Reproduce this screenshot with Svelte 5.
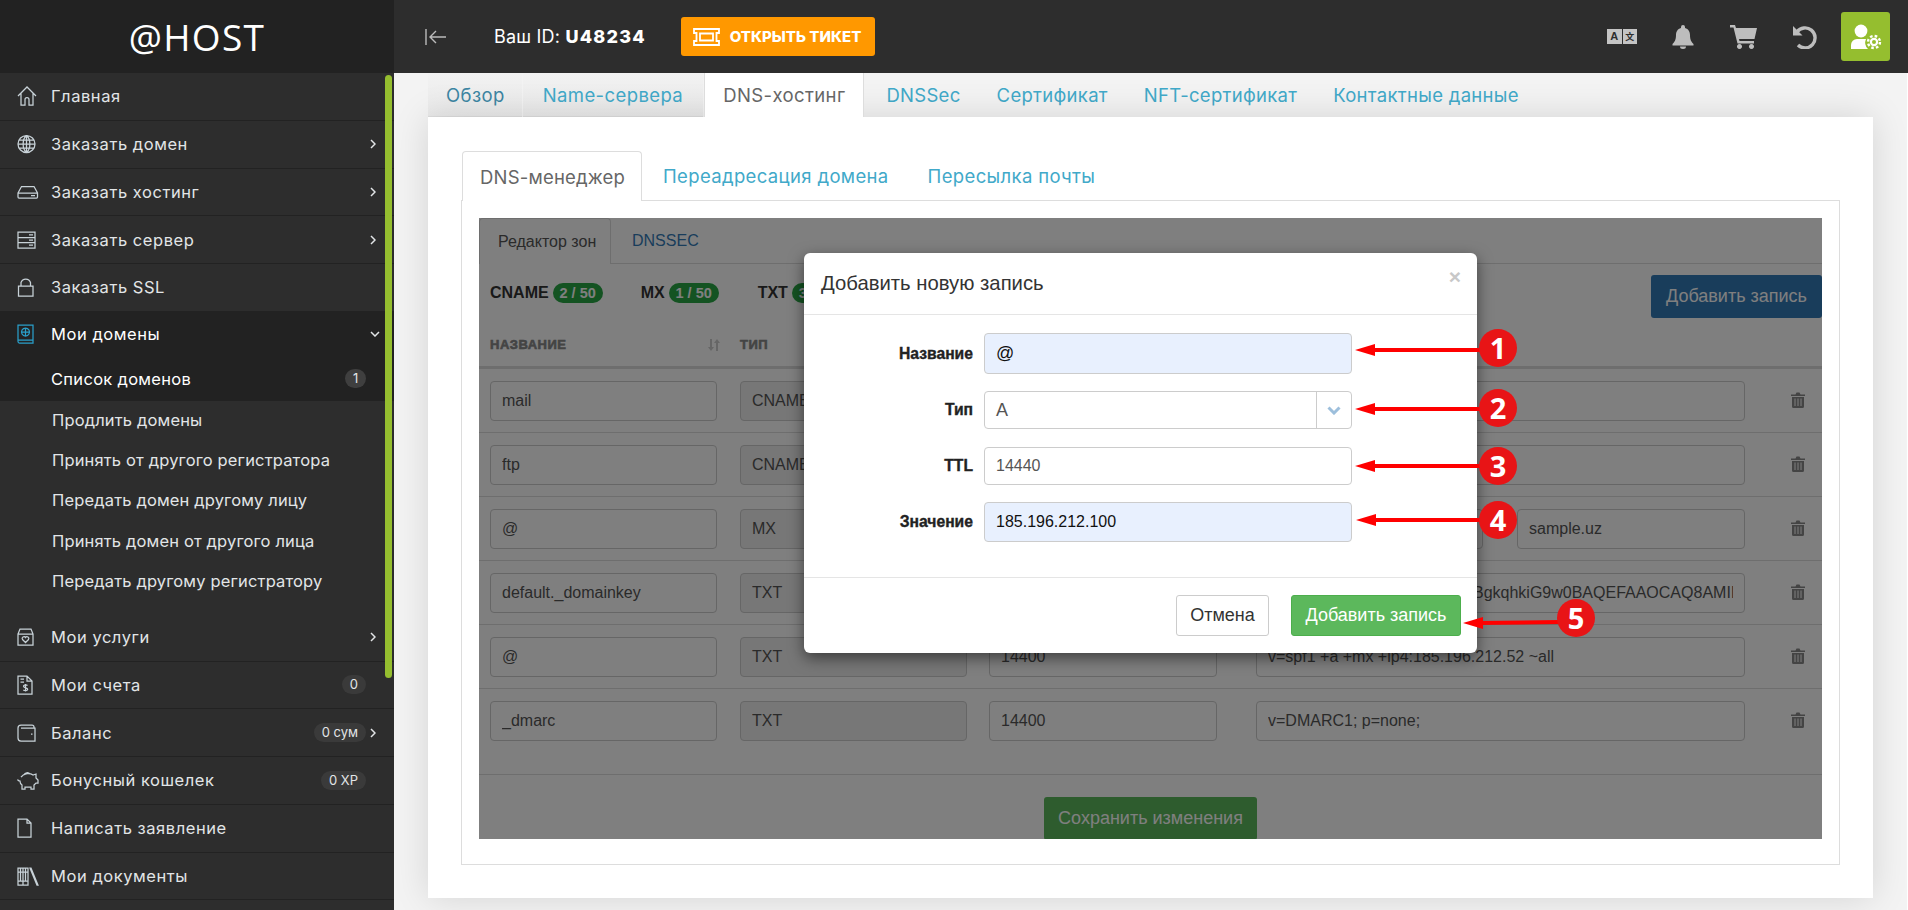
<script>
  const nav1 = [
    { t: 'Главная', i: 'home' },
    { t: 'Заказать домен', i: 'globe', c: 1 },
    { t: 'Заказать хостинг', i: 'hdd', c: 1 },
    { t: 'Заказать сервер', i: 'server', c: 1 },
    { t: 'Заказать SSL', i: 'lock' }
  ];
  const nav2 = [
    { t: 'Мои услуги', i: 'box', c: 1 },
    { t: 'Мои счета', i: 'invoice', b: '0' },
    { t: 'Баланс', i: 'wallet', b: '0 сум', c: 1 },
    { t: 'Бонусный кошелек', i: 'piggy', b: '0 XP' },
    { t: 'Написать заявление', i: 'file' },
    { t: 'Мои документы', i: 'books' }
  ];
  const subs = ['Продлить домены', 'Принять от другого регистратора', 'Передать домен другому лицу', 'Принять домен от другого лица', 'Передать другому регистратору'];
  const icons = {
    home: 'M1 11 L10 2 L19 11 M4 8.5 V20 H8 V14.5 A2 2 0 0 1 12 14.5 V20 H16 V8.5',
    globe: 'M1 11 a8.5 8.5 0 1 0 17 0 a8.5 8.5 0 1 0 -17 0 M1 11 H18 M2 7 H17 M2 15 H17 M9.5 2.5 C5 6 5 16 9.5 19.5 C14 16 14 6 9.5 2.5 M9.5 2.5 V19.5',
    hdd: 'M1 12 L4.5 5.5 H17 L20.5 12 V16 a1 1 0 0 1 -1 1 H2 a1 1 0 0 1 -1 -1 Z M1 12 H20.5 M14 14.5 H18',
    server: 'M1 3 H18 V19 H1 Z M1 8.5 H18 M1 13.5 H18 M12 5.8 H16 M12 11 H16 M12 16 H16',
    lock: 'M1.5 10 H16 V20 H1.5 Z M4 10 V6.5 A5 5 0 0 1 13.5 6.5 V10',
    domains: 'M1 2 H16 V20 H2.5 A1.5 1.5 0 0 1 1 18.5 Z M1 17 H16 M8.5 5 a4 4 0 1 0 .01 0 M4.5 9 H12.5 M8.5 5 V13',
    box: 'M1 8 L3 3 H14 L16 8 V19 H1 Z M1 8 H16 M8.5 16.5 L5.5 13.5 A1.8 1.8 0 0 1 8.5 11.5 A1.8 1.8 0 0 1 11.5 13.5 Z',
    invoice: 'M1 2 H10 L15 7 V20 H1 Z M10 2 V7 H15 M3.5 5 H7 M3.5 8 H7 M10.5 11.5 c-1 -1 -4 -1 -4 .8 c0 2 4.2 1 4.2 3 c0 1.5 -3 1.6 -4.4 .6 M8.5 10 V17.5',
    wallet: 'M1 6 a3 3 0 0 1 3 -3 H15 a2 2 0 0 1 2 2 V6 H4 M1 6 V16 a3 3 0 0 0 3 3 H18 V6 H17 M14 12 h1.5',
    piggy: 'M4 8 C7 4 13 4 16 6 L19 5 V9 L21 11 V14 H19 L17 16 V20 H14 V18 H8 V20 H5 V16 C3.5 15 3 14 3 12 C2 12 1 11.5 .5 10.5 M7 6 A3.5 3.5 0 0 1 13 5',
    file: 'M1 2 H10 L14 6 V20 H1 Z M10 2 V6 H14',
    books: 'M1 3 H6 V20 H1 Z M6 3 H11 V20 H6 Z M1 7 H11 M1 16 H11 M3.5 3 V7 M8.5 3 V7 M3.5 7 V16 M8.5 7 V16 M13 3 L14 3 L21 20 L20 20 Z'
  };
  const tabs = ['Обзор', 'Name-сервера', 'DNS-хостинг', 'DNSSec', 'Сертификат', 'NFT-сертификат', 'Контактные данные'];
  const rows = [
    { n: 'mail', ty: 'CNAME', ttl: '14400', v: 'mail.sample.uz' },
    { n: 'ftp', ty: 'CNAME', ttl: '14400', v: 'sample.uz' },
    { n: '@', ty: 'MX', ttl: '14400', p: '10', v: 'sample.uz' },
    { n: 'default._domainkey', ty: 'TXT', ttl: '14400', v: 'v=DKIM1; k=rsa; p=MIIBIjANBgkqhkiG9w0BAQEFAAOCAQ8AMIIBCgKCAQEA' },
    { n: '@', ty: 'TXT', ttl: '14400', v: 'v=spf1 +a +mx +ip4:185.196.212.52 ~all' },
    { n: '_dmarc', ty: 'TXT', ttl: '14400', v: 'v=DMARC1; p=none;' }
  ];
  const marks = [
    { n: 1, cx: 1498, cy: 348, x1: 1355, y1: 350, x2: 1482, y2: 350 },
    { n: 2, cx: 1498, cy: 408, x1: 1355, y1: 409, x2: 1482, y2: 409 },
    { n: 3, cx: 1498, cy: 466, x1: 1355, y1: 466, x2: 1482, y2: 466 },
    { n: 4, cx: 1498, cy: 520, x1: 1356, y1: 520, x2: 1482, y2: 520 },
    { n: 5, cx: 1576, cy: 618, x1: 1463, y1: 623, x2: 1560, y2: 622 }
  ];
</script>

<div class="app">
  <div class="logo">@HOST</div>

  <header class="top">
    <svg class="toggle" width="22" height="18" viewBox="0 0 22 18"><path d="M1 1 V17 M21 9 H5 M11 3 L5 9 L11 15" /></svg>
    <div class="uid">Ваш ID: <b>U48234</b></div>
    <div class="ticket">
      <svg width="27" height="18" viewBox="0 0 27 18"><path d="M1 1 H26 V5 H23.5 V13 H26 V17 H1 V13 H3.5 V5 H1 Z M7 5.5 H20 V12.5 H7 Z" /></svg>
      <span>ОТКРЫТЬ ТИКЕТ</span>
    </div>
    <div class="tools">
      <div class="lang"><span>A</span><span class="zh">文</span></div>
      <svg class="bell" width="22" height="24" viewBox="0 0 22 24"><path d="M11 0 a2 2 0 0 1 2 2 v1 c3.5 1 5 4 5 7 c0 5 1.5 7 3.5 9 v1.5 H.5 V19 C2.5 17 4 15 4 10 c0 -3 1.5 -6 5 -7 V2 a2 2 0 0 1 2 -2 z M8 21.5 h6 a3 2.5 0 0 1 -6 0 z" /></svg>
      <svg class="cart" width="27" height="24" viewBox="0 0 27 24"><path d="M0 0 H5 L6 3 H27 L24.5 14 H9 L9.5 16 H24 V18.5 H7.5 L3.5 2.5 H0 Z M9.5 19 a2.5 2.5 0 1 1 -.01 0 Z M21.5 19 a2.5 2.5 0 1 1 -.01 0 Z" /></svg>
      <svg class="undo" width="25" height="24" viewBox="0 0 25 24"><path class="arc" d="M5 7 A10 10 0 1 1 6 20" /><path d="M1 1 V10.5 H10.5 Z" /></svg>
      <div class="user">
        <svg width="32" height="26" viewBox="0 0 32 26"><circle cx="11" cy="7" r="6.4" /><path d="M1 25 V21 A6 6 0 0 1 7 15 H16 A9 9 0 0 0 18 25 Z" /><circle class="teeth" cx="24" cy="18" r="6" /><circle class="gear" cx="24" cy="18" r="4.2" /><circle class="hole" cx="24" cy="18" r="2" /></svg>
      </div>
    </div>
  </header>

  <aside class="side">
    {#each nav1 as it}
      <div class="row">
        <svg class="ic" width="22" height="22" viewBox="0 0 22 22"><path d={icons[it.i]} /></svg>
        <span class="lbl">{it.t}</span>
        {#if it.c}<svg class="chev" width="6" height="10" viewBox="0 0 6 10"><path d="M1 1 L5 5 L1 9" /></svg>{/if}
      </div>
    {/each}
    <div class="open">
      <div class="row head">
        <svg class="ic blue" width="22" height="22" viewBox="0 0 22 22"><path d={icons.domains} /></svg>
        <span class="lbl">Мои домены</span>
        <svg class="chev down" width="10" height="6" viewBox="0 0 10 6"><path d="M1 1 L5 5 L9 1" /></svg>
      </div>
      <div class="sub cur"><span>Список доменов</span><em class="pill one">1</em></div>
    </div>
    <div class="sublist">
      {#each subs as s}
        <div class="sub">{s}</div>
      {/each}
    </div>
    {#each nav2 as it}
      <div class="row">
        <svg class="ic" width="22" height="22" viewBox="0 0 22 22"><path d={icons[it.i]} /></svg>
        <span class="lbl">{it.t}</span>
        {#if it.b}<em class="pill">{it.b}</em>{/if}
        <span class="slot">{#if it.c}<svg class="chev" width="6" height="10" viewBox="0 0 6 10"><path d="M1 1 L5 5 L1 9" /></svg>{/if}</span>
      </div>
    {/each}
    <div class="thumb"></div>
  </aside>

  <main class="main">
    <nav class="ttabs">
      {#each tabs as t, i}
        <span class="ttab" class:active={i === 2} class:first={i === 0}>{t}</span>
      {/each}
    </nav>
    <section class="panel">
      <nav class="itabs">
        <span class="itab active">DNS-менеджер</span>
        <span class="itab">Переадресация домена</span>
        <span class="itab">Пересылка почты</span>
      </nav>
      <div class="ibox">
        <div class="zone">
          <nav class="ztabs">
            <span class="ztab active">Редактор зон</span>
            <span class="ztab">DNSSEC</span>
          </nav>
          <div class="counts">
            <b class="cn">CNAME</b><span class="cb">2 / 50</span>
            <b class="cn mx">MX</b><span class="cb">1 / 50</span>
            <b class="cn txt">TXT</b><span class="cb">3 / 50</span>
            <span class="addbtn">Добавить запись</span>
          </div>
          <div class="thead">
            <span>НАЗВАНИЕ<svg width="14" height="14" viewBox="0 0 14 14"><path d="M3 1 h2 v8 h2 l-3 4 l-3 -4 h2 z M9 13 h2 v-8 h2 l-3 -4 l-3 4 h2 z" /></svg></span>
            <span>ТИП</span>
            <span>TTL</span>
            <span>ЗНАЧЕНИЕ</span>
          </div>
          {#each rows as r, i}
            <div class="trow" class:tall={i === rows.length - 1}>
              <input class="f" readonly value={r.n} />
              <input class="f dis" readonly value={r.ty} />
              <input class="f ttl" readonly value={r.ttl} />
              <div class="vals">
                {#if r.p}<input class="f pr" readonly value={r.p} />{/if}
                <input class="f" readonly value={r.v} />
              </div>
              <svg class="trash" width="14" height="16" viewBox="0 0 14 16"><path d="M0 2.5 H4.5 L5.5 .5 H8.5 L9.5 2.5 H14 V4 H0 Z M1 5 H13 V14.5 A1.5 1.5 0 0 1 11.5 16 H2.5 A1.5 1.5 0 0 1 1 14.5 Z" /><path class="bars" d="M4 6.5 V14 M7 6.5 V14 M10 6.5 V14" /></svg>
            </div>
          {/each}
          <div class="savewrap"><span class="save">Сохранить изменения</span></div>

          <div class="veil"></div>
          <div class="modal">
            <div class="mhead"><span>Добавить новую запись</span><i>×</i></div>
            <div class="mbody">
              <label class="lab">Название</label><div class="inp auto big">@</div>
              <label class="lab">Тип</label>
              <div class="inp sel"><span>A</span><i><svg width="14" height="9" viewBox="0 0 14 9"><path d="M1.5 1.5 L7 7 L12.5 1.5" /></svg></i></div>
              <label class="lab">TTL</label><div class="inp grey">14440</div>
              <label class="lab">Значение</label><div class="inp auto mid">185.196.212.100</div>
            </div>
            <div class="mfoot">
              <span class="btn">Отмена</span>
              <span class="btn ok">Добавить запись</span>
            </div>
          </div>
        </div>
      </div>
    </section>
  </main>

  <svg class="marks" width="1908" height="910" viewBox="0 0 1908 910">
    {#each marks as m}
      <line x1={m.x1 + 16} y1={m.y1} x2={m.x2} y2={m.y2} />
      <polygon points="{m.x1},{m.y1} {m.x1 + 20},{m.y1 - 6} {m.x1 + 20},{m.y1 + 6}" />
      <circle cx={m.cx} cy={m.cy} r="19" />
      <text x={m.cx} y={m.cy + 10.5}>{m.n}</text>
    {/each}
  </svg>
</div>

<style>
  :global(body) { margin: 0; background: #f3f3f3; }
  .app {
    position: relative;
    display: grid;
    grid-template-columns: 394px 1514px;
    grid-template-rows: 73px 837px;
    width: 1908px;
    height: 910px;
    overflow: hidden;
    font-family: Inter, "Noto Sans", sans-serif;
  }
  .logo {
    background: #222;
    color: #fff;
    display: flex;
    align-items: center;
    justify-content: center;
    font-family: "Open Sans", sans-serif;
    font-size: 37px;
    font-weight: 500;
    letter-spacing: 1.3px;
  }
  .top {
    background: #2d2d2d;
    display: flex;
    align-items: center;
    color: #fff;
  }
  .toggle { margin-left: 31px; fill: none; stroke: #bbb; stroke-width: 1.4; }
  .uid { margin-left: 47px; font-size: 18px; letter-spacing: .2px; }
  .uid b { font-weight: 800; letter-spacing: 1.2px; }
  .ticket {
    margin-left: 35px;
    width: 194px;
    height: 39px;
    box-sizing: border-box;
    padding-left: 12px;
    background: #ff9800;
    border-radius: 3px;
    display: flex;
    align-items: center;
    gap: 10px;
    font-size: 15px;
    font-weight: 800;
  }
  .ticket svg { fill: none; stroke: #fff; stroke-width: 1.8; flex: none; }
  .tools { margin-left: auto; display: flex; align-items: center; margin-right: 18px; }
  .lang { display: flex; gap: 1px; width: 30px; margin-right: 35px; }
  .lang span {
    width: 14.5px; height: 15px; background: #c4c4c4; color: #2d2d2d;
    font: 700 11px/15px "Liberation Sans", sans-serif; text-align: center;
  }
  .lang .zh { font: 700 9px/15px "Noto Sans CJK SC", sans-serif; }
  .bell, .cart { fill: #bdbdbd; }
  .bell { margin-right: 36px; }
  .cart { margin-right: 35px; }
  .undo { margin-right: 24px; fill: #bdbdbd; }
  .undo .arc { fill: none; stroke: #bdbdbd; stroke-width: 3.4; }
  .user {
    width: 49px; height: 49px; background: #95be2f; border-radius: 3px;
    display: flex; align-items: center; justify-content: center;
  }
  .user svg { fill: #fff; }
  .user .teeth { fill: none; stroke: #fff; stroke-width: 2.4; stroke-dasharray: 2.6 2.1; }
  .user .gear { fill: #fff; }
  .user .hole { fill: #95be2f; }

  .side {
    position: relative;
    background: #2d2d2d;
    overflow: hidden;
    color: #e2e5e7;
    font-size: 16.5px;
  }
  .row {
    display: flex;
    align-items: center;
    height: 47.75px;
    box-sizing: border-box;
    padding: 0 18px 0 17px;
    border-bottom: 1px solid #222;
  }
  .ic { flex: none; fill: none; stroke: #c8d2d8; stroke-width: 1.25; margin-right: 12px; }
  .ic.blue { stroke: #2a9fc9; }
  .lbl { flex: 1; letter-spacing: .55px; }
  .chev { fill: none; stroke: #e2e5e7; stroke-width: 1.5; }
  .chev.down { margin-right: -4px; }
  .slot { width: 10px; display: flex; justify-content: flex-end; flex: none; }
  .pill {
    font-style: normal; font-size: 13px; line-height: 19px; height: 19px;
    padding: 0 8px; border-radius: 10px; background: #3a3a3a; color: #e2e5e7;
  }
  .open { background: #222; height: 89px; border: 0; }
  .open .row { border: 0; height: 45px; color: #fff; }
  .sub { height: 40.3px; display: flex; align-items: center; padding-left: 52px; letter-spacing: .15px; }
  .sub.cur { padding: 0 28px 0 51px; height: 44px; color: #fff; justify-content: space-between; box-sizing: border-box; letter-spacing: .3px; }
  .pill.one { padding: 0 7.5px; background: #3f3f3f; }
  .sublist { height: 214px; margin-top: -1px; }
  .thumb { position: absolute; left: 385px; top: 2px; width: 7px; height: 603px; background: #95be2f; border-radius: 4px; }

  .main {
    background: #f3f3f3;
    padding-left: 34px;
    border-right: 1px solid #fff;
    overflow: hidden;
    color: #555;
  }
  .ttabs { display: flex; height: 44px; gap: 1px; font-size: 18.5px; }
  .ttab {
    padding: 0 20px; display: flex; align-items: center; white-space: nowrap;
    color: #41a9c9; letter-spacing: .4px;
    background: linear-gradient(#f2f2f2, #e9e9e9);
    border-bottom: 1px solid #ddd; box-sizing: border-box;
  }
  .ttab:nth-child(n+3) { padding: 0 18px; }
  .ttab:nth-child(n+4) { background: none; border-color: transparent; padding: 0 17px 0 18px; letter-spacing: .3px; }
  .ttab:nth-child(4) { padding-left: 21px; }
  .ttab.first { color: #3d86a3; padding: 0 17px 0 18px; }
  .ttab.active { background: #fff; color: #666; border: 1px solid #ddd; border-width: 0 1px; position: relative; z-index: 1; }
  .panel {
    position: relative;
    width: 1445px;
    height: 781px;
    box-sizing: border-box;
    padding: 34px 33px;
    background: #fff;
    box-shadow: 0 0 34px rgba(0, 0, 0, .13);
  }
  .itabs { display: flex; height: 50px; font-size: 18.5px; position: relative; z-index: 1; }
  .itab { padding: 0 18px; display: flex; align-items: center; color: #41a9c9; letter-spacing: .35px; box-sizing: border-box; height: 49px; margin-right: 3px; }
  .itab.active { color: #666; height: 50px; width: 180px; padding: 0 0 0 17px; white-space: nowrap; letter-spacing: .2px; background: #fff; border: 1px solid #ddd; border-bottom: 0; border-radius: 4px 4px 0 0; margin-left: 1px; }
  .ibox { border: 1px solid #ddd; margin-top: -1px; padding: 17px 17px 24px; height: 665px; box-sizing: border-box; width: 1379px; }

  .zone { position: relative; width: 1343px; height: 621px; overflow: hidden; font-family: "Liberation Sans", Arial, sans-serif; font-size: 16px; }
  .ztabs { display: flex; height: 46px; border-bottom: 1px solid #ddd; box-sizing: border-box; }
  .ztab { padding: 0 21px; display: flex; align-items: center; color: #337ab7; }
  .ztab.active { width: 132px; box-sizing: border-box; padding: 0 0 0 18px; color: #555; border: 1px solid #ddd; border-bottom: 0; border-radius: 4px 4px 0 0; background: #fff; height: 46px; }
  .counts { position: relative; display: flex; align-items: center; height: 56px; padding: 1px 0 0 11px; box-sizing: border-box; color: #333; }
  .cn { font-size: 16px; }
  .cb { margin-left: 4px; width: 50px; height: 20px; border-radius: 10px; background: #28a745; color: #fff; font-weight: 700; font-size: 14.5px; line-height: 21px; text-align: center; margin-top: 1px; }
  .mx { margin-left: 38px; }
  .txt { margin-left: 39px; }
  .addbtn { position: absolute; left: 1172px; top: 11px; width: 171px; height: 43px; display: flex; align-items: center; justify-content: center; color: #fff; background: #337ab7; border-radius: 3px; font-size: 18px; }
  .thead { display: grid; grid-template-columns: 250px 249px 267px 489px; padding: 2px 0 0 11px; height: 49px; border-bottom: 3px solid #ddd; box-sizing: border-box; align-items: center; font-size: 13px; font-weight: 700; color: #888; -webkit-text-stroke: .6px #888; letter-spacing: .5px; }
  .thead span { position: relative; }
  .thead svg { position: absolute; left: 217px; top: 1px; fill: #ccc; stroke: none; }
  .trow {
    display: grid;
    grid-template-columns: 250px 249px 267px 489px 1fr;
    align-items: start;
    height: 64px;
    box-sizing: border-box;
    padding: 12px 0 0 11px;
    border-bottom: 1px solid #ddd;
  }
  .trow.tall { height: 86px; }
  .f {
    width: 227px; height: 40px; box-sizing: border-box; padding: 0 11px;
    border: 1px solid #ccc; border-radius: 4px; background: #fff; color: #555;
    font: 16px "Liberation Sans", Arial, sans-serif; outline: none; min-width: 0;
  }
  .dis { background: #eee; }
  .ttl { width: 228px; }
  .vals { display: flex; gap: 34px; }
  .vals .f { flex: 1; width: 0; }
  .vals .pr { flex: none; width: 227px; }
  .trash { margin: 11px 0 0 46px; fill: #888; }
  .trash .bars { fill: none; stroke: #fff; stroke-width: 1; }
  .savewrap { display: flex; justify-content: center; padding-top: 22px; }
  .save { flex: none; width: 213px; height: 43px; display: flex; align-items: center; justify-content: center; background: #5cb85c; color: #fff; border-radius: 3px; font-size: 18px; }
  .veil { position: absolute; inset: 0; background: rgba(0, 0, 0, .5); }
  .modal {
    position: absolute; left: 325px; top: 35px; width: 673px; height: 400px;
    background: #fff; border-radius: 6px; box-shadow: 0 5px 15px rgba(0, 0, 0, .5);
    color: #333; display: flex; flex-direction: column;
  }
  .mhead { height: 62px; box-sizing: border-box; border-bottom: 1px solid #e5e5e5; display: flex; align-items: center; justify-content: space-between; padding: 0 17px; font-size: 20.3px; }
  .mhead i { font: 700 21px "Liberation Sans", sans-serif; color: #c8c8c8; margin-top: -14px; margin-right: -1px; }
  .mbody { flex: 1; display: grid; grid-template-columns: 169px 368px; column-gap: 11px; align-content: start; padding-top: 18px; row-gap: 17.3px; }
  .lab { text-align: right; font-weight: 700; font-size: 15.7px; color: #222; align-self: center; -webkit-text-stroke: .35px #222; }
  .inp { display: flex; align-items: center; height: 38px; box-sizing: border-box; border: 1px solid #ccc; border-radius: 4px; padding: 0 11px; font-size: 16px; color: #555; }
  .auto { background: #e8f0fe; color: #111; }
  .big { height: 41px; font-size: 18px; }
  .mid { height: 40px; }
  .sel { padding-right: 0; font-size: 18px; justify-content: space-between; }
  .sel i { width: 34px; height: 100%; border-left: 1px solid #ccc; display: flex; align-items: center; justify-content: center; }
  .sel svg { fill: none; stroke: #9dbfdc; stroke-width: 3; }
  .mfoot { height: 76px; box-sizing: border-box; border-top: 1px solid #e5e5e5; display: flex; justify-content: flex-end; gap: 22px; padding: 17px 16px 0 0; }
  .btn { height: 41px; box-sizing: border-box; width: 93px; display: flex; align-items: center; justify-content: center; font-size: 18px; border: 1px solid #ccc; border-radius: 3px; color: #333; }
  .btn.ok { width: 170px; background: #5cb85c; border-color: #4cae4c; color: #fff; }
  .marks { position: absolute; left: 0; top: 0; pointer-events: none; }
  .marks line { stroke: #f00; stroke-width: 4; }
  .marks polygon { fill: #f00; }
  .marks circle { fill: #e81416; }
  .marks text { fill: #fff; font: 700 29px "Open Sans", sans-serif; text-anchor: middle; }
</style>
